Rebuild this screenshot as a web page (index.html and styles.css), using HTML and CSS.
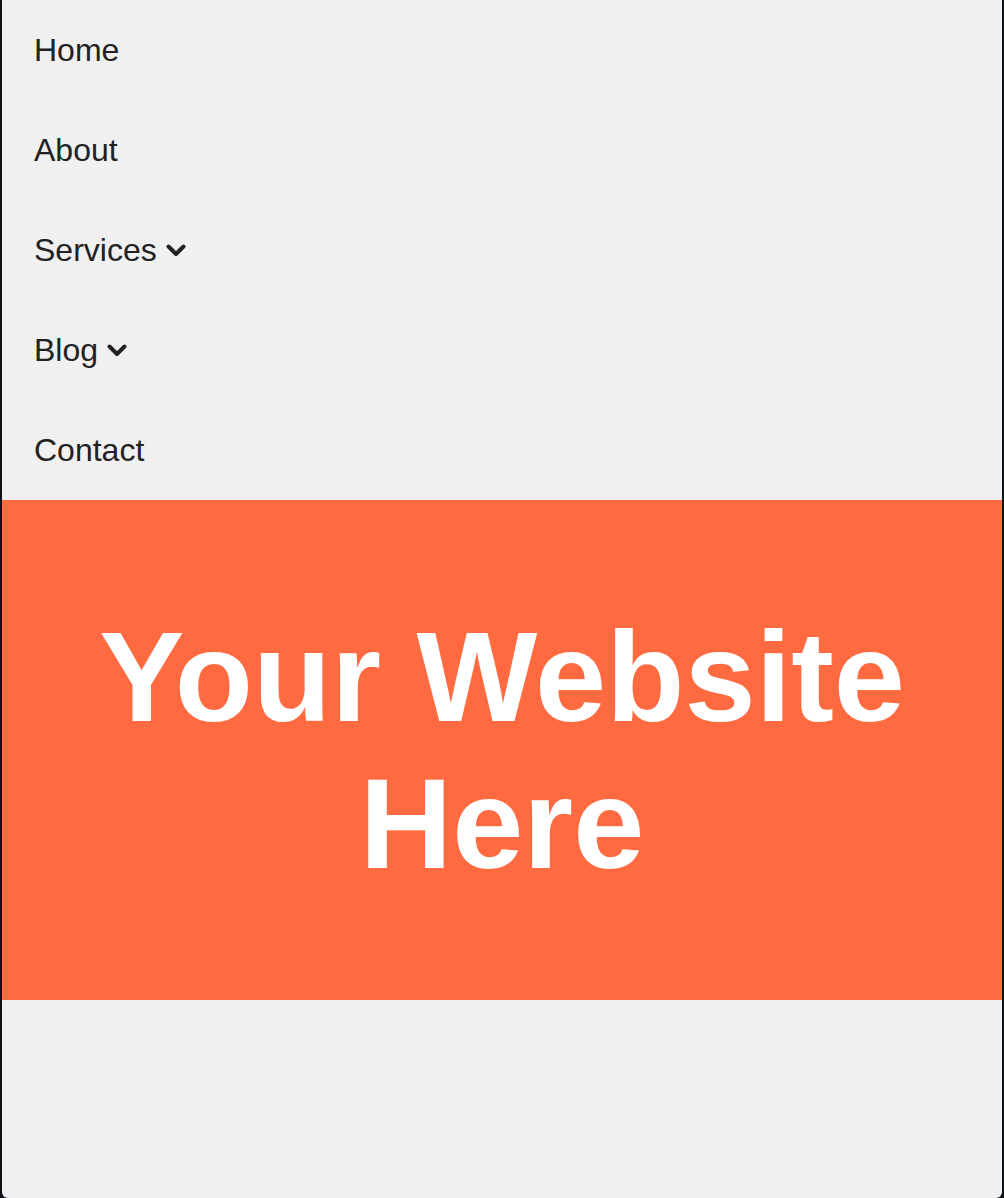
FILE: index.html
```html
<!DOCTYPE html>
<html lang="en">
<head>
<meta charset="utf-8">
<title>Your Website Here</title>
<link rel="stylesheet" href="styles.css">
</head>
<body>
<div class="window">
  <nav class="nav">
    <a class="nav-item" href="#">Home</a>
    <a class="nav-item" href="#">About</a>
    <a class="nav-item" href="#">Services
      <svg class="chev" viewBox="0 0 20 14" width="20" height="14" aria-hidden="true"><path d="M2.5 3.5 L10 11 L17.5 3.5" fill="none" stroke="#222" stroke-width="4" stroke-linecap="round" stroke-linejoin="round"/></svg>
    </a>
    <a class="nav-item" href="#">Blog
      <svg class="chev" viewBox="0 0 20 14" width="20" height="14" aria-hidden="true"><path d="M2.5 3.5 L10 11 L17.5 3.5" fill="none" stroke="#222" stroke-width="4" stroke-linecap="round" stroke-linejoin="round"/></svg>
    </a>
    <a class="nav-item" href="#">Contact</a>
  </nav>
  <header class="hero">
    <h1 class="hero-title">Your Website Here</h1>
  </header>
</div>
</body>
</html>
```

FILE: styles.css
```css
html, body {
  margin: 0;
  padding: 0;
  height: 100%;
}
body {
  background: #0e1116;
  font-family: "Liberation Sans", Arial, sans-serif;
}
.window {
  margin: 0 2px;
  height: 1198px;
  background: #f0f0f0;
  border-radius: 0 0 6px 6px;
  overflow: hidden;
}
.nav {
  display: flex;
  flex-direction: column;
}
.nav-item {
  height: 100px;
  display: flex;
  align-items: center;
  gap: 9px;
  padding-left: 32px;
  font-size: 32px;
  color: #222;
  text-decoration: none;
}
.chev {
  display: block;
  margin-top: -1px;
}
.hero {
  height: 500px;
  background: #ff6a41;
  display: flex;
  align-items: center;
  justify-content: center;
}
.hero-title {
  margin: 0;
  width: 860px;
  text-align: center;
  color: #fff;
  font-size: 128px;
  font-weight: bold;
  line-height: 1.15;
}
```
